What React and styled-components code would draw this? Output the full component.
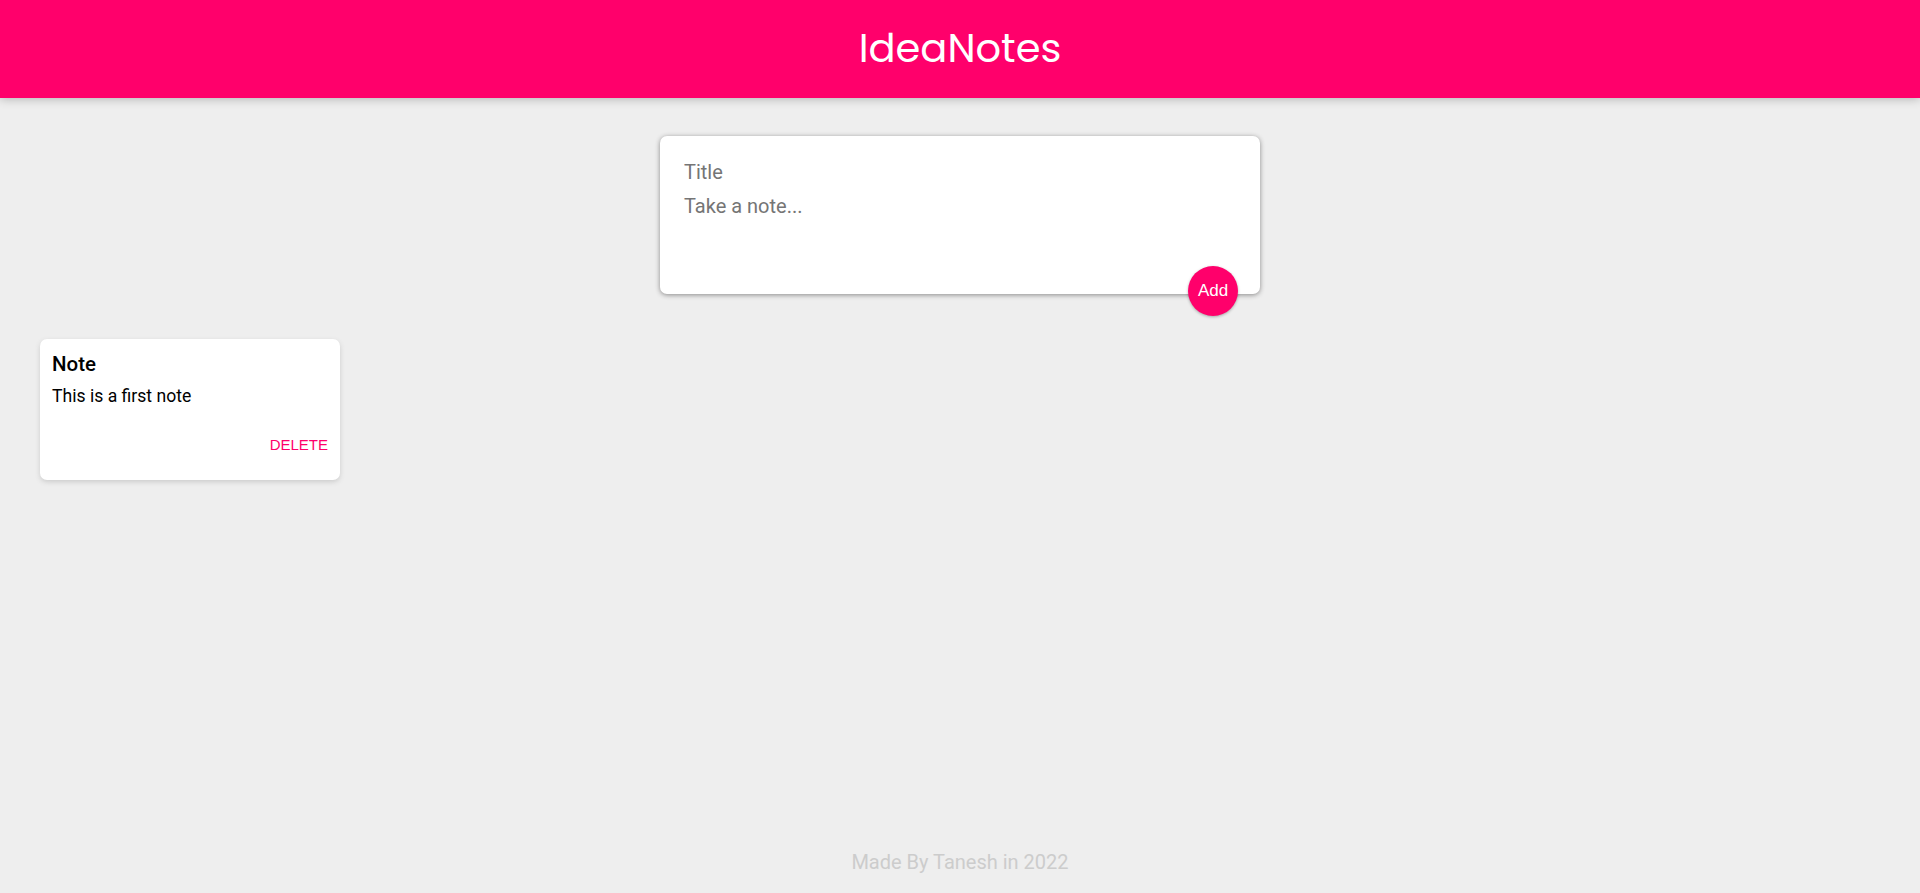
import React from "react";
import styled, { createGlobalStyle } from "styled-components";

const GlobalStyle = createGlobalStyle`
  * { box-sizing: border-box; }
  html, body { margin: 0; padding: 0; }
  body {
    background: #eeeeee;
    font-family: Roboto, "Liberation Sans", sans-serif;
  }
`;

const Page = styled.div`
  min-height: 100vh;
  display: flex;
  flex-direction: column;
`;

const Header = styled.header`
  height: 98px;
  background: #ff006b;
  box-shadow: 0 0 10px 0 rgba(0, 0, 0, 0.3);
  display: flex;
  align-items: center;
  justify-content: center;
`;

const Brand = styled.h1`
  margin: 0;
  color: #ffffff;
  font-family: Poppins, Lato, "Open Sans", sans-serif;
  font-weight: 400;
  font-size: 40px;
  letter-spacing: 0;
  line-height: 1;
  padding-bottom: 3px;
`;

const CreateForm = styled.form`
  position: relative;
  width: 600px;
  margin: 38px auto 0;
  background: #ffffff;
  padding: 20px;
  border-radius: 7px;
  box-shadow: 0 1px 5px rgb(138, 137, 137);
`;

const TitleInput = styled.input`
  display: block;
  width: 100%;
  border: none;
  outline: none;
  padding: 4px;
  margin: 0 0 2px;
  font-family: Roboto, sans-serif;
  font-size: 20px;
  line-height: normal;
  color: #000;
  caret-color: #000;
  &::placeholder { color: #757575; }
`;

const NoteArea = styled.textarea`
  display: block;
  width: 100%;
  height: 84px;
  border: none;
  outline: none;
  padding: 4px;
  margin: 0;
  resize: none;
  font-family: Roboto, sans-serif;
  font-size: 20px;
  line-height: normal;
  &::placeholder { color: #757575; }
`;

const AddButton = styled.button`
  position: absolute;
  right: 22px;
  bottom: -22px;
  width: 50px;
  height: 50px;
  padding: 0;
  border: none;
  border-radius: 50%;
  background: #ff006b;
  color: #ffffff;
  font-family: "Liberation Sans", Arial, sans-serif;
  font-size: 17px;
  box-shadow: 0 1px 3px rgba(0, 0, 0, 0.3);
  cursor: pointer;
`;

const NotesArea = styled.div`
  display: flex;
  flex-wrap: wrap;
  gap: 32px;
  padding: 45px 40px 0;
`;

const NoteCard = styled.div`
  width: 300px;
  background: #ffffff;
  border-radius: 7px;
  box-shadow: 0 2px 5px #cccccc;
  padding: 13px 12px 16px;
  display: flex;
  flex-direction: column;
`;

const NoteTitle = styled.h1`
  margin: 0 0 9.5px;
  font-size: 20.5px;
  font-weight: 500;
  color: #000;
  line-height: normal;
`;

const NoteText = styled.p`
  margin: 0;
  font-size: 17.6px;
  color: #000;
  line-height: normal;
`;

const NoteActions = styled.div`
  display: flex;
  justify-content: flex-end;
  margin-top: 18.5px;
`;

const DeleteButton = styled.button`
  height: 40px;
  padding: 0;
  border: none;
  background: transparent;
  color: #ff006b;
  font-family: "Liberation Sans", Arial, sans-serif;
  font-size: 15px;
  font-weight: 400;
  cursor: pointer;
`;

const Footer = styled.footer`
  margin-top: auto;
  text-align: center;
  padding-bottom: 19px;
`;

const FooterText = styled.p`
  margin: 0;
  color: #cccccc;
  font-size: 20px;
  line-height: normal;
`;

const notes = [{ title: "Note", content: "This is a first note" }];

export default function App() {
  return (
    <Page>
      <GlobalStyle />
      <Header>
        <Brand>IdeaNotes</Brand>
      </Header>
      <CreateForm onSubmit={(e) => e.preventDefault()}>
        <TitleInput name="title" placeholder="Title" autoFocus />
        <NoteArea name="content" placeholder="Take a note..." rows={3} />
        <AddButton type="submit">Add</AddButton>
      </CreateForm>
      <NotesArea>
        {notes.map((n, i) => (
          <NoteCard key={i}>
            <NoteTitle>{n.title}</NoteTitle>
            <NoteText>{n.content}</NoteText>
            <NoteActions>
              <DeleteButton>DELETE</DeleteButton>
            </NoteActions>
          </NoteCard>
        ))}
      </NotesArea>
      <Footer>
        <FooterText>Made By Tanesh in 2022</FooterText>
      </Footer>
    </Page>
  );
}
